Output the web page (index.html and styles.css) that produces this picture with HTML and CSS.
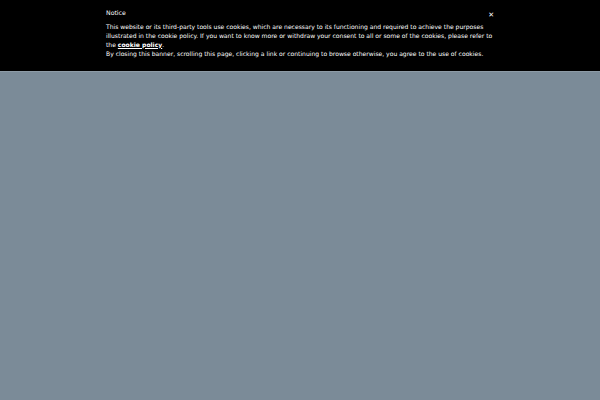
FILE: index.html
```html
<!DOCTYPE html>
<html>
<head>
<meta charset="utf-8">
<link rel="stylesheet" href="styles.css">
</head>
<body>
<div class="banner">
  <div class="inner">
    <div class="head">
      <div class="title">Notice</div>
      <button class="close" aria-label="Close">&#x2715;</button>
    </div>
    <p class="text">This website or its third-party tools use cookies, which are necessary to its functioning and required to achieve the purposes illustrated in the cookie policy. If you want to know more or withdraw your consent to all or some of the cookies, please refer to the <a href="#">cookie policy</a>.<br>By closing this banner, scrolling this page, clicking a link or continuing to browse otherwise, you agree to the use of cookies.</p>
  </div>
</div>
</body>
</html>
```
FILE: styles.css
```css
html, body { margin: 0; padding: 0; }
body {
  background: #7b8b98;
  width: 600px;
  height: 400px;
  font-family: "DejaVu Sans", sans-serif;
}
.banner {
  background: #000;
  color: #fff;
  height: 71px;
  box-sizing: border-box;
  padding-top: 8px;
  box-shadow: 0 1px 0 #8d9ba6;
}
.inner {
  width: 390px;
  margin: 0 auto;
  padding-left: 1px;
  box-sizing: border-box;
}
.head {
  display: flex;
  justify-content: space-between;
  align-items: flex-start;
  height: 9px;
}
.title {
  font-size: 6.2px;
  line-height: 9px;
}
.close {
  background: none;
  border: none;
  color: #fff;
  font-size: 7px;
  padding: 0;
  margin-top: 2.5px;
  margin-right: 1px;
  line-height: 8px;
  font-family: "DejaVu Sans", sans-serif;
}
.text {
  margin: 4.5px 0 0 0;
  font-size: 6.05px;
  line-height: 9px;
}
.text a {
  color: #fff;
  font-weight: bold;
  text-decoration: underline;
}
```
